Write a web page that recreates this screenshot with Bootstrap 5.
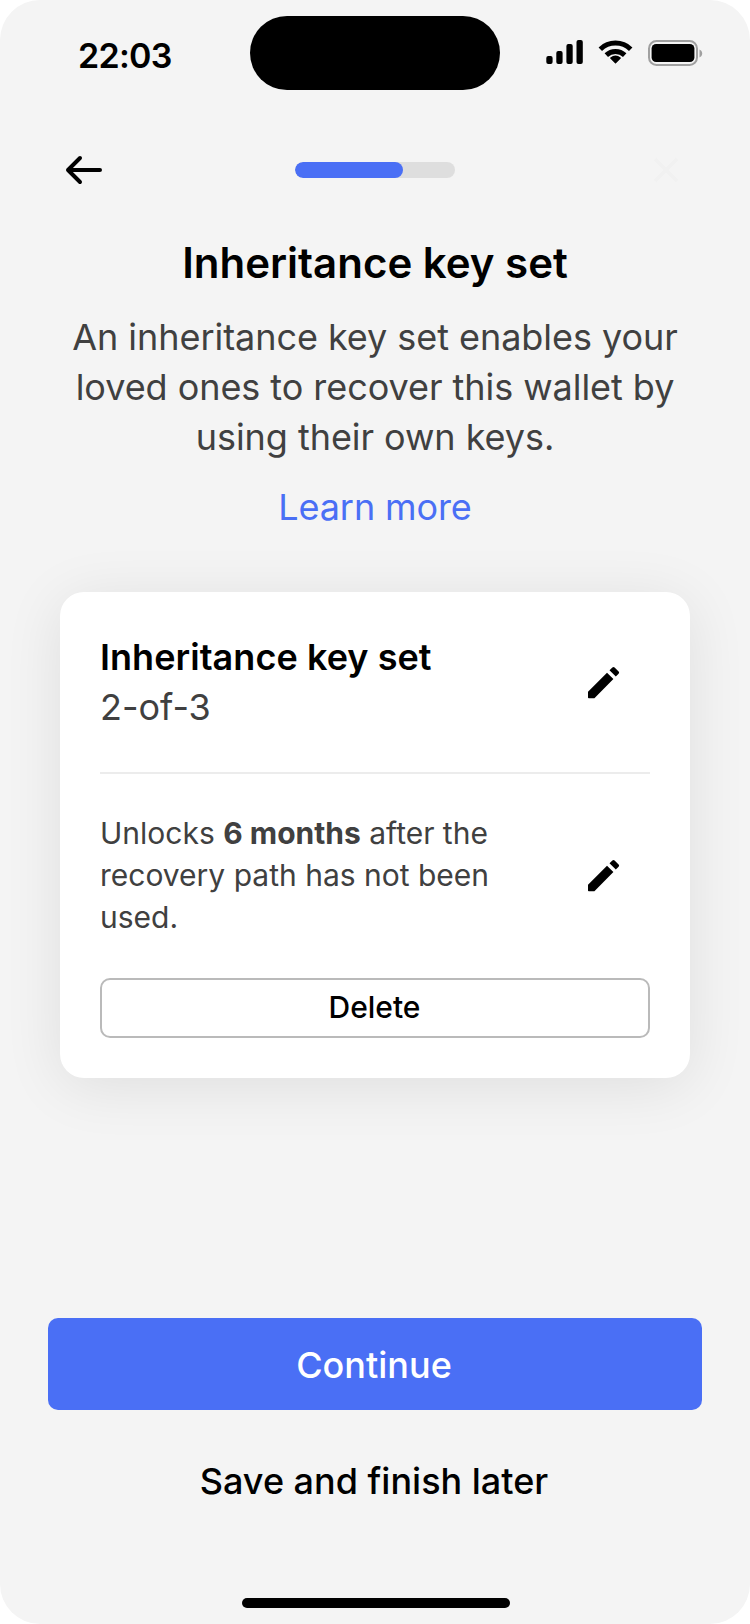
<!DOCTYPE html>
<html lang="en">
<head>
<meta charset="utf-8">
<meta name="viewport" content="width=device-width, initial-scale=1">
<title>Inheritance key set</title>
<link href="https://cdn.jsdelivr.net/npm/bootstrap@5.3.0/dist/css/bootstrap.min.css" rel="stylesheet">
<style>
  :root { --accent: #4a6ff5; --ink: #404040; --surface: #f4f4f4; }
  body { background: #fff; color: #000; font-family: Inter, "Liberation Sans", sans-serif; font-size: 36px; line-height: 50px; }
  svg { display: block; }
  .phone { width: 750px; height: 1624px; background: var(--surface); border-radius: 40px; overflow: hidden; }
  .status-bar { height: 90px; padding: 16px 46px 0 78px; }
  .clock { width: 172px; font-size: 34px; font-weight: 600; line-height: 80px; letter-spacing: -.7px; }
  .island { width: 250px; height: 74px; }
  .status-icons { padding: 24px 0 0 46px; }
  .wifi { margin-left: 15px; }
  .battery { margin-left: 15px; }
  .top-bar { height: 40px; margin: 60px 64px 0; }
  .top-bar .btn { width: 40px; height: 40px; }
  .step-progress { --bs-progress-height: 16px; --bs-progress-bg: #dedede; --bs-progress-bar-bg: var(--accent); --bs-progress-border-radius: 8px; width: 160px; }
  .step-progress .progress-bar { width: 67.5%; border-radius: 8px; }
  .intro { padding: 48px 60px 0; }
  .intro h1 { font-size: 42px; line-height: 50px; font-weight: 600; margin-bottom: 24px; }
  .soft { color: var(--ink); }
  .body-copy { margin-bottom: 20px; letter-spacing: -.05px; }
  .learn { color: var(--accent); letter-spacing: -.1px; }
  .key-card { --bs-card-border-width: 0; --bs-card-border-radius: 24px; --bs-card-inner-border-radius: 24px; --bs-card-spacer-x: 40px; --bs-card-spacer-y: 40px; margin: 60px 60px 0; box-shadow: 0 8px 60px rgba(0,0,0,.09); }
  .key-card h2 { font-size: 36px; line-height: 50px; font-weight: 600; letter-spacing: .05px; }
  .rule { height: 2px; background: #ececec; margin: 40px 0 38px; }
  .unlock-copy { width: 410px; font-size: 30px; line-height: 42px; }
  .edit-btn { width: 92px; height: 60px; padding-top: 1px; }
  .delete-btn { height: 60px; margin-top: 40px; padding: 0 1px 2px 0; border: 2px solid #bababa; border-radius: 10px; font-size: 30px; line-height: 42px; font-weight: 500; color: #000; }
  .actions { padding: 0 48px; margin-bottom: 92px; }
  .continue-btn { height: 92px; padding: 2px 2px 0 0; border-radius: 10px; background: var(--accent); color: #fff; font-size: 36px; font-weight: 500; }
  .later-btn { height: 50px; margin-top: 46px; padding: 0 2px 0 0; font-size: 36px; line-height: 50px; font-weight: 500; color: #000; }
  .home-bar { width: 268px; height: 10px; margin: 0 240px 16px 242px; }
</style>
</head>
<body>
<main class="phone d-flex flex-column">
  <header class="status-bar d-flex align-items-start flex-shrink-0">
    <div class="clock">22:03</div>
    <div class="island bg-black rounded-pill"></div>
    <div class="status-icons d-flex">
      <svg width="37" height="24" viewBox="0 0 37 24"><rect x="0.3" y="16" width="6.3" height="8" rx="2"/><rect x="10.3" y="11" width="6.3" height="13" rx="2"/><rect x="20.4" y="4" width="6.3" height="20" rx="2"/><rect x="30.5" y="0" width="6.3" height="24" rx="2"/></svg>
      <svg class="wifi" width="35" height="24" viewBox="0 0 35 24"><g fill="none" stroke="#000" stroke-width="5"><path d="M2.300 9.200a22 22 0 0 1 30.400 0"/><path d="M8.300 15.200a13.500 13.500 0 0 1 18.400 0"/></g><path d="M12.300 18.600q-.5-.6.1-1.100 5.100-3.900 10.200 0 .6.500.1 1.100L18 23.200q-.5.500-1 0z"/></svg>
      <svg class="battery" width="55" height="26" viewBox="0 0 55 26"><rect x="1" y="1" width="48" height="24" rx="7.500" fill="none" stroke="#a0a0a0" stroke-width="2"/><rect x="3.600" y="4" width="42.800" height="18" rx="4.500"/><path d="M51.500 9.500v8c1.600-.7 2.700-2.200 2.700-4s-1.100-3.300-2.700-4z" fill="#a0a0a0"/></svg>
    </div>
  </header>

  <nav class="top-bar d-flex justify-content-between align-items-center flex-shrink-0">
    <button class="btn border-0 p-0" type="button" aria-label="Back">
      <svg width="40" height="40" viewBox="0 0 40 40" fill="none" stroke="#000" stroke-width="4" stroke-linecap="round" stroke-linejoin="round"><path d="M36 20H4M16 8 4 20l12 12"/></svg>
    </button>
    <div class="progress step-progress" role="progressbar" aria-label="Progress"><div class="progress-bar"></div></div>
    <button class="btn border-0 p-0" type="button" aria-label="Close">
      <svg width="40" height="40" viewBox="0 0 40 40" fill="none" stroke="#f1f1f1" stroke-width="3.500"><path d="M9 9l22 22M31 9 9 31"/></svg>
    </button>
  </nav>

  <section class="intro text-center flex-shrink-0">
    <h1>Inheritance key set</h1>
    <p class="body-copy soft">An inheritance key set enables your<br>loved ones to recover this wallet by<br>using their own keys.</p>
    <a class="learn d-block text-decoration-none" href="#">Learn more</a>
  </section>

  <section class="card key-card flex-shrink-0">
    <div class="card-body">
      <div class="d-flex justify-content-between align-items-center">
        <div>
          <h2 class="mb-0">Inheritance key set</h2>
          <div class="soft">2-of-3</div>
        </div>
        <button class="btn edit-btn border-0 px-0 pb-0 d-flex align-items-center justify-content-center" type="button" aria-label="Edit keys">
          <svg width="32" height="32" viewBox="0 0 32 32"><path d="M0 24.700 19 5.700l6.400 6.400L6.400 31.200H.8q-.8 0-.8-.8zM21.500 3.300 24.400.5q1.100-1 2.200 0l4 4q1 1.100 0 2.200l-2.800 2.800z"/></svg>
        </button>
      </div>
      <div class="rule"></div>
      <div class="d-flex justify-content-between align-items-center">
        <p class="unlock-copy soft mb-0">Unlocks <b>6 months</b> after the<br>recovery path has not been<br>used.</p>
        <button class="btn edit-btn border-0 px-0 pb-0 d-flex align-items-center justify-content-center" type="button" aria-label="Edit timing">
          <svg width="32" height="32" viewBox="0 0 32 32"><path d="M0 24.700 19 5.700l6.400 6.400L6.400 31.200H.8q-.8 0-.8-.8zM21.500 3.300 24.400.5q1.100-1 2.200 0l4 4q1 1.100 0 2.200l-2.800 2.800z"/></svg>
        </button>
      </div>
      <button class="btn delete-btn w-100" type="button">Delete</button>
    </div>
  </section>

  <footer class="actions mt-auto flex-shrink-0">
    <button class="btn continue-btn w-100 border-0" type="button">Continue</button>
    <button class="btn later-btn w-100 border-0" type="button">Save and finish later</button>
  </footer>
  <div class="home-bar bg-black rounded-pill flex-shrink-0"></div>
</main>
<script src="https://cdn.jsdelivr.net/npm/bootstrap@5.3.0/dist/js/bootstrap.bundle.min.js"></script>
</body>
</html>
